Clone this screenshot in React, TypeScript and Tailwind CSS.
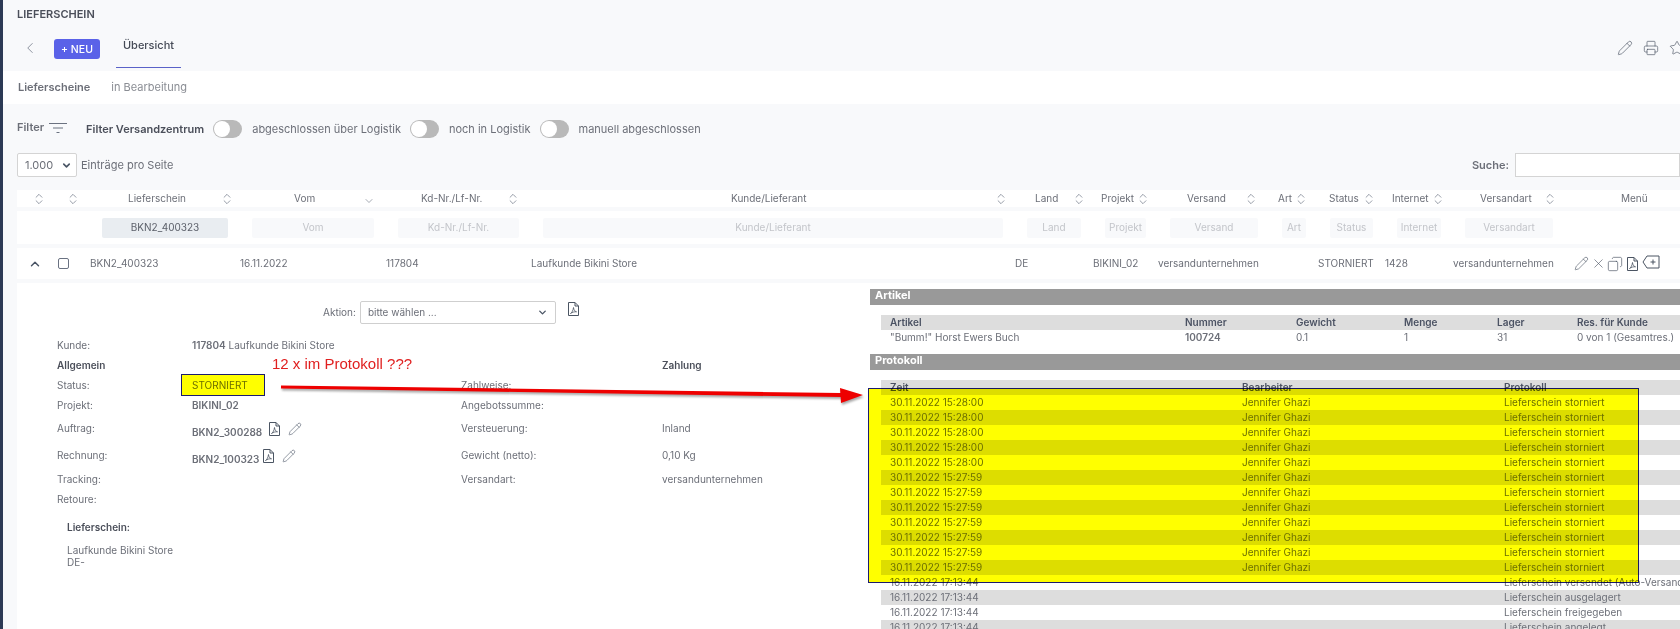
import { ChevronDown, ChevronLeft, ChevronUp, ChevronsUpDown, Copy, Pencil, Printer, Star, X } from "lucide-react";

const gridCols =
  "grid grid-cols-[39px_34px_150px_146px_145px_484px_78px_65px_112px_48px_67px_68px_112px_115px]";

const headers = [
  { label: "Lieferschein", sort: "pl-[38px]", gap: "ml-[34px]" },
  { label: "Vom", sort: "pl-[54px]", gap: "ml-[48px]", down: true },
  { label: "Kd-Nr./Lf-Nr.", sort: "pl-[35px]", gap: "ml-[24px]" },
  { label: "Kunde/Lieferant", sort: "pl-[200px]", gap: "ml-[188px]" },
  { label: "Land", sort: "pl-[20px]", gap: "ml-[14px]" },
  { label: "Projekt", sort: "pl-[8px]", gap: "ml-[2px]" },
  { label: "Versand", sort: "pl-[29px]", gap: "ml-[18px]" },
  { label: "Art", sort: "pl-[8px]", gap: "ml-[2px]" },
  { label: "Status", sort: "pl-[11px]", gap: "ml-[3px]" },
  { label: "Internet", sort: "pl-[7px]", gap: "ml-[2px]" },
  { label: "Versandart", sort: "pl-[27px]", gap: "ml-[11px]" },
];

const filters = [
  { label: "BKN2_400323", active: true },
  { label: "Vom" },
  { label: "Kd-Nr./Lf-Nr." },
  { label: "Kunde/Lieferant" },
  { label: "Land" },
  { label: "Projekt" },
  { label: "Versand" },
  { label: "Art" },
  { label: "Status" },
  { label: "Internet" },
  { label: "Versandart" },
];

const rowValues = [
  "BKN2_400323",
  "16.11.2022",
  "117804",
  "Laufkunde Bikini Store",
  "DE",
  "BIKINI_02",
  "versandunternehmen",
  "",
  "STORNIERT",
  "1428",
  "versandunternehmen",
];

const protocol = [
  ...Array(5).fill({ time: "30.11.2022 15:28:00", user: "Jennifer Ghazi", text: "Lieferschein storniert" }),
  ...Array(7).fill({ time: "30.11.2022 15:27:59", user: "Jennifer Ghazi", text: "Lieferschein storniert" }),
  { time: "16.11.2022 17:13:44", user: "", text: "Lieferschein versendet (Auto-Versand)" },
  { time: "16.11.2022 17:13:44", user: "", text: "Lieferschein ausgelagert" },
  { time: "16.11.2022 17:13:44", user: "", text: "Lieferschein freigegeben" },
  { time: "16.11.2022 17:13:44", user: "", text: "Lieferschein angelegt" },
];

function PdfIcon({ className = "" }: { className?: string }) {
  return (
    <svg viewBox="0 0 12 16" fill="none" stroke="#4b5563" strokeWidth="1" className={className}>
      <path d="M1 1.5h6.5L11 5v9.5H1z" />
      <path d="M7.5 1.5V5H11" />
      <path d="M3 12.5c1.5-1 2.6-3 3-6 .3 2.5 1 3.6 3 4.3-2-.2-4 .3-6 1.7z" strokeWidth="0.8" />
    </svg>
  );
}

function SortIcon({ className = "" }: { className?: string }) {
  return <ChevronsUpDown strokeWidth={1.2} className={`h-[14px] w-[14px] shrink-0 text-gray-500 ${className}`} />;
}

function Toggle() {
  return (
    <span className="flex h-[18px] w-[29px] items-center rounded-full bg-[#b9b9b9] pl-[1px]">
      <span className="h-4 w-4 rounded-full bg-white" />
    </span>
  );
}

function InfoRow({
  label,
  value,
  label2,
  value2,
  height = "h-5",
}: {
  label: string;
  value?: React.ReactNode;
  label2?: string;
  value2?: React.ReactNode;
  height?: string;
}) {
  return (
    <div className={`grid grid-cols-[135px_269px_201px_1fr] items-center ${height}`}>
      <span>{label}</span>
      <div>{value}</div>
      <span>{label2}</span>
      <div>{value2}</div>
    </div>
  );
}

function SectionBar({ title }: { title: string }) {
  return <div className="h-4 bg-[#999999] pl-[5px] text-[11px] leading-[13px] font-bold text-white">{title}</div>;
}

export default function App() {
  return (
    <div className="relative h-[629px] w-[1680px] overflow-hidden border-l-[3px] border-[#2c3a55] bg-[#f8f9fb] font-['Inter',sans-serif] text-[10px] leading-[15px] text-[#6c6f78]">
      {/* Kopf */}
      <div className="flex h-[22px] items-end pl-[14px] text-[11px] font-semibold text-[#4b4f5a]">LIEFERSCHEIN</div>
      <div className="flex h-[48.5px] items-center pt-[4px] pl-[18px]">
        <ChevronLeft strokeWidth={1} className="h-[18px] w-[18px] text-gray-500" />
        <button className="mt-[2px] ml-[15px] flex h-5 w-[46px] items-center justify-center rounded-[3px] bg-[#5a62e8] text-[10.5px] font-medium text-white">
          + NEU
        </button>
        <div className="ml-[16px] flex h-[41.5px] w-[65px] items-center justify-center self-start border-b border-[#5a62c8] pb-[1.5px] text-[11px] font-medium text-[#454a56]">
          Übersicht
        </div>
        <div className="mr-[-5px] ml-auto flex items-center gap-[10px] text-[#4b5563]">
          <Pencil strokeWidth={1} className="h-4 w-4" />
          <Printer strokeWidth={1} className="h-4 w-4" />
          <Star strokeWidth={1} className="h-4 w-4" />
        </div>
      </div>
      <div className="flex h-[33.5px] items-center gap-[21px] bg-white pl-[15px] text-[11px]">
        <span className="font-semibold">Lieferscheine</span>
        <span className="text-[#8a8d94]">in Bearbeitung</span>
      </div>

      {/* Filter */}
      <div className="flex h-[49px] items-center pb-[2px] pl-[14px] text-[11px]">
        <span className="font-semibold">Filter</span>
        <svg viewBox="0 0 18 12" className="ml-[5px] h-3 w-[18px]" stroke="#6b7280" strokeWidth="1">
          <path d="M0 1.5h18M4 6h10M7.5 10.5h3" />
        </svg>
        <span className="mt-[3px] ml-[19px] flex items-center">
          <span className="font-semibold text-[#4b4f5a]">Filter Versandzentrum</span>
          <span className="ml-[9px]"><Toggle /></span>
          <span className="ml-[10px]">abgeschlossen über Logistik</span>
          <span className="ml-[9px]"><Toggle /></span>
          <span className="ml-[10px]">noch in Logistik</span>
          <span className="ml-[9px]"><Toggle /></span>
          <span className="ml-[10px]">manuell abgeschlossen</span>
        </span>
      </div>

      {/* Seitenlaenge und Suche */}
      <div className="flex h-6 items-center pl-[14px] text-[11px]">
        <div className="flex h-6 w-[60px] items-center justify-between rounded-[2px] border border-[#d4d4d4] bg-white pr-[4px] pl-[7px]">
          <span>1.000</span>
          <ChevronDown strokeWidth={3.5} className="h-[11px] w-[11px] text-gray-600" />
        </div>
        <span className="ml-[4px]">Einträge pro Seite</span>
        <div className="ml-auto flex items-center">
          <span className="mr-[6px] font-semibold">Suche:</span>
          <div className="h-6 w-[165px] border border-[#d4d4d4] bg-white" />
        </div>
      </div>

      {/* Tabelle */}
      <div className="mt-[13px] ml-[14px] w-[1800px]">
        <div className={`${gridCols} h-[17px] items-center bg-white`}>
          <div className="flex justify-center pl-[5px]"><SortIcon /></div>
          <div className="flex justify-center"><SortIcon /></div>
          {headers.map((h) => (
            <div key={h.label} className={`flex items-center whitespace-nowrap ${h.sort}`}>
              <span>{h.label}</span>
              {h.down ? (
                <ChevronDown strokeWidth={1.2} className={`mt-[5px] h-[12px] w-[12px] shrink-0 text-gray-500 ${h.gap}`} />
              ) : (
                <SortIcon className={h.gap} />
              )}
            </div>
          ))}
          <div className="pl-[56px]">Menü</div>
        </div>
        <div className={`${gridCols} mt-[4px] h-[33px] items-center bg-white`}>
          <div />
          <div />
          {filters.map((f) => (
            <div key={f.label} className="px-[12px]">
              <div
                className={`flex h-5 items-center justify-center rounded-[2px] whitespace-nowrap ${
                  f.active ? "bg-[#e9edf1] text-[#5c606a]" : "bg-[#f8f9fb] text-[#c3c5ca]"
                }`}
              >
                {f.label}
              </div>
            </div>
          ))}
        </div>
        <div className={`${gridCols} mt-[4px] h-[31px] items-center bg-white`}>
          <div className="flex justify-center pr-[4px]">
            <ChevronUp strokeWidth={2.5} className="h-[14px] w-[14px] text-gray-600" />
          </div>
          <div className="pl-[2px]">
            <span className="block h-[11px] w-[11px] rounded-[2px] border border-gray-500" />
          </div>
          {rowValues.map((v, i) => (
            <div key={i} className="whitespace-nowrap">{v}</div>
          ))}
          <div className="flex items-center pl-[9px] text-[#4b5563]">
            <Pencil strokeWidth={1} className="h-[15px] w-[15px]" />
            <X strokeWidth={1} className="ml-[2px] h-[15px] w-[15px]" />
            <Copy strokeWidth={1} className="ml-[1px] h-4 w-4 -scale-x-100" />
            <PdfIcon className="ml-[3px] h-4 w-[13px]" />
            <svg viewBox="0 0 18 14" fill="none" stroke="#4b5563" strokeWidth="1" className="mb-[4px] ml-[3px] h-[14px] w-[18px]">
              <path d="M5 1h12v12H5L1 7z" />
              <path d="M11 4.5v5M8.5 7h5" />
            </svg>
          </div>
        </div>
      </div>

      {/* Details */}
      <div className="mt-[4px] ml-[14px] flex h-[346px] bg-white">
        <div className="w-[853px] shrink-0 pl-[40px]">
          <div className="mt-[18px] flex h-[23px] items-center pl-[266px]">
            <span>Aktion:</span>
            <div className="ml-[4px] flex h-[23px] w-[196px] items-center justify-between rounded-[2px] border border-[#cfcfcf] px-[7px]">
              <span>bitte wählen ...</span>
              <ChevronDown strokeWidth={3} className="h-[11px] w-[11px] text-gray-600" />
            </div>
            <PdfIcon className="mb-[7px] ml-[11px] h-4 w-[13px]" />
          </div>
          <div className="mt-[11px]">
            <InfoRow
              label="Kunde:"
              value={
                <span>
                  <b className="font-semibold">117804</b> Laufkunde Bikini Store
                </span>
              }
            />
            <InfoRow
              label=""
              value={<span />}
              label2=""
              value2={<b className="font-semibold text-[#4b4f5a]">Zahlung</b>}
            />
            <div className="-mt-5 h-5 leading-5 font-semibold text-[#4b4f5a]">Allgemein</div>
            <InfoRow
              label="Status:"
              value={
                <span className="relative block">
                  STORNIERT
                  <span className="absolute top-[-4px] left-[-11px] h-[22px] w-[84px] border border-[#1c1c6e] bg-[#ffff00] mix-blend-multiply" />
                </span>
              }
              label2="Zahlweise:"
            />
            <InfoRow label="Projekt:" value={<b className="font-semibold">BIKINI_02</b>} label2="Angebotssumme:" />
            <InfoRow
              label="Auftrag:"
              height="h-[27px]"
              value={
                <span className="flex items-center">
                  <b className="mt-[8px] font-semibold">BKN2_300288</b>
                  <PdfIcon className="ml-[6px] h-4 w-[13px]" />
                  <Pencil strokeWidth={1} className="ml-[7px] h-[14px] w-[14px] text-gray-600" />
                </span>
              }
              label2="Versteuerung:"
              value2="Inland"
            />
            <InfoRow
              label="Rechnung:"
              height="h-[27px]"
              value={
                <span className="flex items-center">
                  <b className="mt-[8px] font-semibold">BKN2_100323</b>
                  <PdfIcon className="ml-[3px] h-4 w-[13px]" />
                  <Pencil strokeWidth={1} className="ml-[7px] h-[14px] w-[14px] text-gray-600" />
                </span>
              }
              label2="Gewicht (netto):"
              value2="0,10 Kg"
            />
            <InfoRow label="Tracking:" label2="Versandart:" value2="versandunternehmen" />
            <InfoRow label="Retoure:" />
          </div>
          <div className="mt-[8px] pl-[10px]">
            <div className="h-5 leading-5 font-semibold text-[#4b4f5a]">Lieferschein:</div>
            <div className="mt-[7px] leading-[12px]">
              Laufkunde Bikini Store
              <br />
              DE-
            </div>
          </div>
        </div>

        <div className="min-w-0 flex-1 pt-[6px]">
          <SectionBar title="Artikel" />
          <div className="pt-[10px] pl-[11px]">
            <div className="grid h-[15px] grid-cols-[295px_111px_108px_93px_80px_1fr] items-center bg-[#dddddd] pl-[9px] font-semibold text-[#4b5263]">
              <span>Artikel</span>
              <span>Nummer</span>
              <span>Gewicht</span>
              <span>Menge</span>
              <span>Lager</span>
              <span>Res. für Kunde</span>
            </div>
            <div className="grid h-[15px] grid-cols-[295px_111px_108px_93px_80px_1fr] items-center pl-[9px] whitespace-nowrap">
              <span>"Bumm!" Horst Ewers Buch</span>
              <b className="font-semibold">100724</b>
              <span>0.1</span>
              <span>1</span>
              <span>31</span>
              <span>0 von 1 (Gesamtres.)</span>
            </div>
          </div>
          <div className="mt-[9px]">
            <SectionBar title="Protokoll" />
          </div>
          <div className="pt-[10px] pl-[11px]">
            <div className="grid h-[15px] grid-cols-[352px_262px_1fr] items-center bg-[#dddddd] pl-[9px] font-semibold text-[#4b5263]">
              <span>Zeit</span>
              <span>Bearbeiter</span>
              <span>Protokoll</span>
            </div>
            {protocol.map((p, i) => (
              <div
                key={i}
                className={`grid h-[15px] grid-cols-[352px_262px_1fr] items-center pl-[9px] whitespace-nowrap ${
                  i % 2 === 1 ? "bg-[#dddddd]" : "bg-white"
                }`}
              >
                <span>{p.time}</span>
                <span>{p.user}</span>
                <span>{p.text}</span>
              </div>
            ))}
          </div>
        </div>
      </div>

      {/* Markierungen */}
      <span className="absolute top-[355px] left-[269px] font-['Liberation_Sans',sans-serif] text-[15px] leading-[18px] text-[#e02020]">
        12 x im Protokoll ???
      </span>
      <svg viewBox="0 0 600 30" className="absolute top-[375px] left-[275px] h-[30px] w-[600px] drop-shadow-[1px_2px_1px_rgba(0,0,0,0.35)]">
        <polygon points="3,10.5 3,13.5 563,22 563,18" fill="#ee0000" />
        <polygon points="562,13 585,20 563,28" fill="#ee0000" />
      </svg>
      <div className="absolute top-[388px] left-[865px] h-[195px] w-[771px] border border-[#1c1c6e] bg-[#ffff00] mix-blend-multiply" />
    </div>
  );
}
